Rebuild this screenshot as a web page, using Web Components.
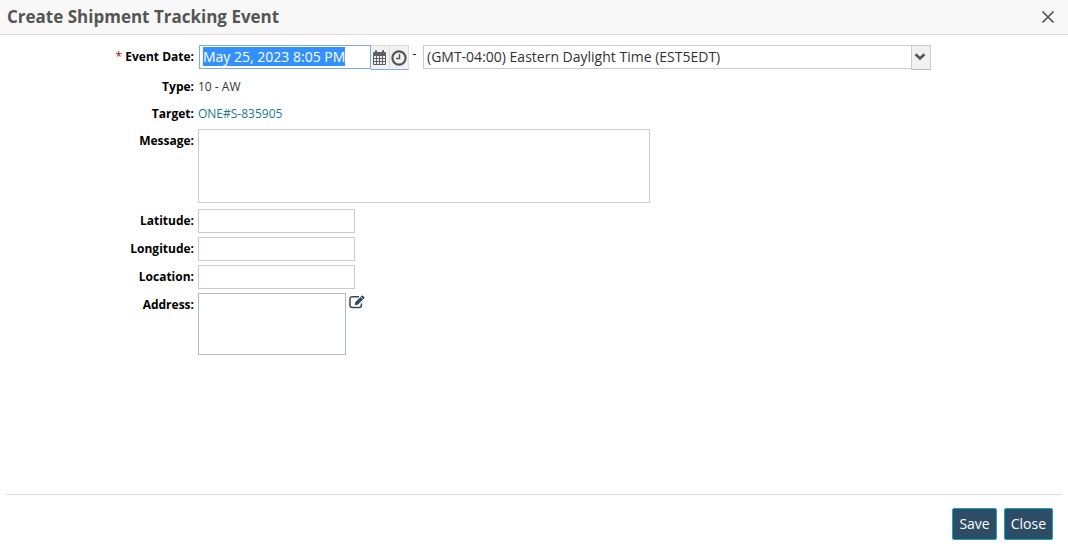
<!DOCTYPE html>
<html lang="en">
<head>
<meta charset="utf-8">
<title>Create Shipment Tracking Event</title>
<style>
  body { margin: 0; background: #fff; color: #333; font: 12px/24px "Open Sans", sans-serif; }
</style>
</head>
<body>
<tracking-event-dialog></tracking-event-dialog>

<template id="dialog-shell">
  <style>
    :host { display: flex; flex-direction: column; min-height: 100vh; }
    header { display: flex; align-items: center; justify-content: space-between; height: 34px; padding: 0 13px 0 7px; background: #f8f8f8; border-bottom: 1px solid #ddd; }
    h1 { margin: 0; font-size: 17px; line-height: 24px; font-weight: 700; color: #555; }
    .x { display: grid; place-items: center; width: 14px; height: 14px; padding: 0; border: 0; background: none; }
    main { flex: 1; padding-top: 10px; }
    footer { display: flex; justify-content: flex-end; gap: 7px; margin: 0 6px; padding: 13px 9px 17px; border-top: 1px solid #ddd; }
  </style>
  <header>
    <h1><slot name="title"></slot></h1>
    <button class="x" type="button" aria-label="Close dialog">
      <svg width="14" height="14" viewBox="0 0 14 14" fill="none" stroke="#555" stroke-width="1.7"><path d="M1.5 1.5l11 11M12.500 1.500l-11 11"/></svg>
    </button>
  </header>
  <main><slot></slot></main>
  <footer><slot name="actions"></slot></footer>
</template>

<template id="form-row">
  <style>
    :host { display: grid; grid-template-columns: 194px minmax(0, 1fr); column-gap: 4px; min-height: 24px; margin-bottom: 3px; }
    label, .label { text-align: right; font-weight: 700; color: #000; }
    .req { color: #b00; font-weight: 400; }
    .field { display: flex; align-items: flex-start; min-width: 0; }
    input, textarea { box-sizing: border-box; margin: 0; padding: 0 4px; border: 1px solid #ccc; border-radius: 0; outline: 0; resize: none; background: #fff; color: #333; font: 14px/20px "Open Sans", sans-serif; }
    input { flex: 0 1 157px; min-width: 0; height: 24px; margin-bottom: 1px; }
    .date { flex: 0 1 172px; margin: 0; padding: 0 3px 1px; border-color: #7eadd9; }
    .date::selection { background: #3390ff; color: #fff; }
    .message { flex: 0 1 452px; min-width: 0; height: 74px; margin-bottom: 3px; }
    .address { flex: 0 1 148px; min-width: 0; height: 62px; border-color: #b5b8c8; }
    a { color: #1a7a8c; text-decoration: none; }
    .edit { display: block; padding: 0; margin: 1px 0 0 3px; border: 0; background: none; height: 16px; }
    svg { display: block; }
  </style>
</template>

<template id="date-zone">
  <style>
    :host { display: flex; flex: 1; align-items: flex-start; min-width: 0; margin: 0 0 2px 1px; }
    select { display: block; box-sizing: border-box; width: 100%; height: 24px; margin: 0; padding: 0 24px 0 3px; border: 1px solid #ccc; border-radius: 0; outline: 0; appearance: none; background: #fff; color: #333; font: 14px/20px "Open Sans", sans-serif; }
    button { box-sizing: border-box; display: grid; place-items: center; width: 19px; height: 25px; padding: 0; border: solid #ddd; border-width: 1px 1px 1px 0; border-bottom-color: #7eadd9; background: #f1f1f1; }
    svg { display: block; }
    .dash { flex: none; width: 14px; padding-right: 3px; box-sizing: border-box; text-align: center; line-height: 18px; color: #000; }
    .zone { position: relative; flex: 0 1 508px; min-width: 0; height: 25px; }
    .arrow { position: absolute; top: 0; right: 0; box-sizing: border-box; display: grid; place-items: center; width: 20px; height: 25px; padding: 0 2px 2px 0; border: 1px solid #ccc; border-bottom-color: #b5b8c8; background: #f1f1f1; pointer-events: none; }
  </style>
  <slot></slot>
  <button type="button" aria-label="Choose date">
    <svg width="16" height="16" viewBox="0 0 16 16"><path fill="#606060" fill-rule="evenodd" d="M3 1a1 1 0 0 1 2 0v1h5V1a1 1 0 0 1 2 0v1h1q1 0 1 1v11q0 1-1 1H2q-1 0-1-1V3q0-1 1-1h1zM2 6v2h2V6zm3 0v2h2V6zm3 0v2h2V6zm3 0v2h2V6zM2 9v2h2V9zm3 0v2h2V9zm3 0v2h2V9zm3 0v2h2V9zm-9 3v2h2v-2zm3 0v2h2v-2zm3 0v2h2v-2zm3 0v2h2v-2z"/></svg>
  </button>
  <button type="button" aria-label="Choose time">
    <svg width="16" height="16" viewBox="0 0 16 16" fill="none" stroke="#555"><circle cx="8" cy="8" r="6.600" stroke-width="2.200"/><path d="M8.500 4v4.500H5" stroke-width="1.400"/></svg>
  </button>
  <span class="dash">-</span>
  <div class="zone">
    <select aria-label="Time zone"><option>(GMT-04:00) Eastern Daylight Time (EST5EDT)</option></select>
    <span class="arrow"><svg width="12" height="8" viewBox="0 0 12 8" fill="none" stroke="#555" stroke-width="2.600"><path d="M1.500 1.300L6 5.500l4.500-4.200"/></svg></span>
  </div>
</template>

<template id="action-button">
  <style>
    :host { display: block; }
    button { box-sizing: border-box; height: 32px; padding: 0 6px; border: 1px solid #1aa3c0; border-radius: 2px; background: #2d4d66; color: #fff; font: 14px/20px "Open Sans", sans-serif; }
  </style>
  <button type="button"><slot></slot></button>
</template>

<template id="event-dialog">
  <style>:host { display: block; }</style>
  <dialog-shell>
    <span slot="title">Create Shipment Tracking Event</span>
    <form-row label="Event Date:" kind="date" required></form-row>
    <form-row label="Type:" kind="text" value="10 - AW"></form-row>
    <form-row label="Target:" kind="link" value="ONE#S-835905"></form-row>
    <form-row label="Message:" kind="message"></form-row>
    <form-row label="Latitude:" kind="input"></form-row>
    <form-row label="Longitude:" kind="input"></form-row>
    <form-row label="Location:" kind="input"></form-row>
    <form-row label="Address:" kind="address"></form-row>
    <action-button slot="actions">Save</action-button>
    <action-button slot="actions">Close</action-button>
  </dialog-shell>
</template>

<script>
  class TemplateElement extends HTMLElement {
    constructor() {
      super();
      const t = document.getElementById(this.constructor.template);
      this.attachShadow({ mode: "open" }).append(t.content.cloneNode(true));
    }
  }

  customElements.define("action-button", class extends TemplateElement { static template = "action-button"; });
  customElements.define("dialog-shell", class extends TemplateElement { static template = "dialog-shell"; });
  customElements.define("date-zone", class extends TemplateElement { static template = "date-zone"; });

  customElements.define("form-row", class extends TemplateElement {
    static template = "form-row";
    connectedCallback() {
      const kind = this.getAttribute("kind");
      const value = this.getAttribute("value") || "";
      const label = this.getAttribute("label");
      const star = this.hasAttribute("required") ? '<span class="req">*</span> ' : "";
      const fields = {
        date: '<date-zone><input id="f" class="date" type="text" value="May 25, 2023 8:05 PM"></date-zone>',
        text: `<span>${value}</span>`,
        link: `<a href="#target">${value}</a>`,
        input: '<input id="f" type="text">',
        message: '<textarea id="f" class="message"></textarea>',
        address: `<textarea id="f" class="address"></textarea>
          <button class="edit" type="button" aria-label="Edit address">
            <svg width="16" height="16" viewBox="0 0 16 16" fill="none" stroke="#34495e"><path d="M10 2.700H3.200Q1 2.700 1 4.900v6.400q0 2.200 2.200 2.200h7q2.200 0 2.200-2.200V9.500" stroke-width="1.500"/><path d="M5.800 11.200l.5-3L12.700 1.800q.6-.5 1.200 0l1.300 1.300q.5.600 0 1.200L8.800 10.700z" fill="#34495e" stroke="none"/><path d="M11.600 2.800l2.600 2.600" stroke="#fff" stroke-width=".7"/></svg>
          </button>`
      };
      const tied = kind !== "text" && kind !== "link";
      const caption = tied ? `<label for="f">${star}${label}</label>` : `<span class="label">${label}</span>`;
      this.shadowRoot.append(document.createRange().createContextualFragment(`${caption}<div class="field">${fields[kind]}</div>`));
      if (kind === "date") {
        const input = this.shadowRoot.getElementById("f");
        input.focus();
        input.select();
      }
    }
  });

  customElements.define("tracking-event-dialog", class extends TemplateElement { static template = "event-dialog"; });
</script>
</body>
</html>
